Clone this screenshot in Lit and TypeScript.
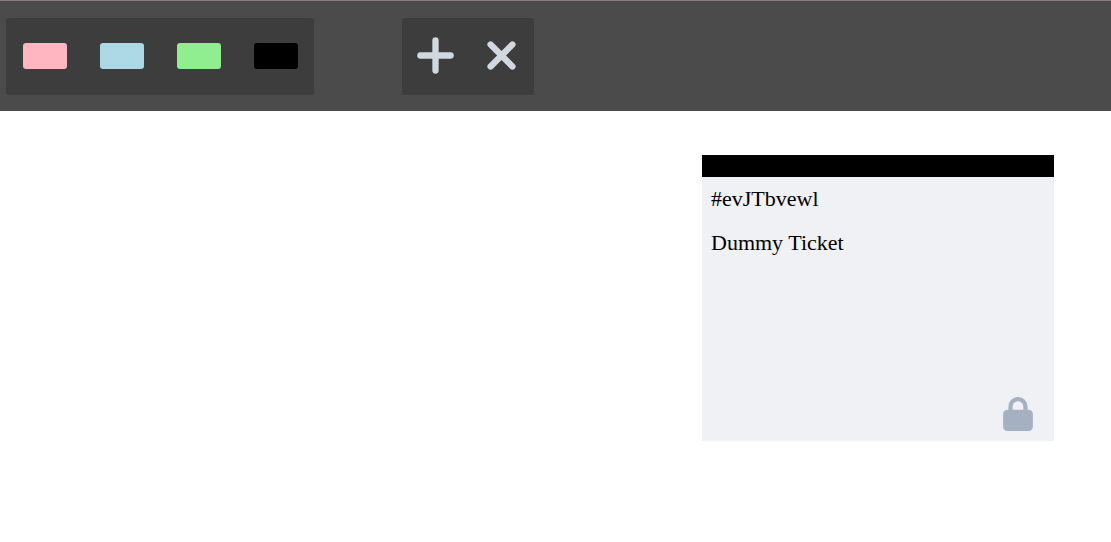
import { LitElement, html, css } from "lit";
import { customElement, state } from "lit/decorators.js";
import { classMap } from "lit/directives/class-map.js";

const COLORS = ["lightpink", "lightblue", "lightgreen", "black"];

@customElement("ticket-card")
class TicketCard extends LitElement {
  static properties = { ticketId: {}, text: {} };
  declare ticketId: string;
  declare text: string;

  static styles = css`
    :host {
      display: flex;
      flex-direction: column;
      width: 352px;
      min-height: 286px;
      background: #f0f1f5;
      color: #000;
      font-family: "Liberation Serif", "Times New Roman", serif;
      font-size: 22px;
      line-height: 44px;
    }
    .band {
      height: 22px;
      background: black;
    }
    .id,
    .task {
      padding: 0 9px;
    }
    .task {
      flex: 1;
    }
    .lock {
      align-self: flex-end;
      display: block;
      margin: 0 21px 10px 0;
      padding: 0;
      border: 0;
      background: none;
      line-height: 0;
      cursor: pointer;
    }
    svg {
      width: 30px;
      height: 34px;
      fill: #a5b1c2;
    }
  `;

  render() {
    return html`
      <div class="band"></div>
      <div class="id">${this.ticketId}</div>
      <div class="task">${this.text}</div>
      <button class="lock" aria-label="Unlock ticket">
        <svg viewBox="0 0 448 512">
          <path
            d="M144 144v48H304V144c0-44.2-35.8-80-80-80s-80 35.8-80 80zM80 192V144C80 64.5 144.5 0 224 0s144 64.5 144 144v48h16c35.3 0 64 28.7 64 64V448c0 35.3-28.7 64-64 64H64c-35.3 0-64-28.7-64-64V256c0-35.3 28.7-64 64-64H80z"
          />
        </svg>
      </button>
    `;
  }
}

@customElement("app-root")
class AppRoot extends LitElement {
  @state() private removing = false;

  static styles = css`
    :host {
      display: block;
    }
    .toolbar {
      display: flex;
      gap: 88px;
      padding: 17px 6px 16px;
      border-top: 1px solid #8d7b80;
      background: #4b4b4b;
    }
    .panel {
      display: flex;
      border-radius: 3px;
      background: #3d3d3d;
    }
    .colors {
      gap: 33px;
      padding: 25px 16px 26px 17px;
    }
    .actions {
      padding-bottom: 2px;
    }
    button {
      padding: 0;
      border: 0;
      cursor: pointer;
    }
    .swatch {
      width: 44px;
      height: 26px;
      border-radius: 3px;
    }
    .lightpink {
      background: lightpink;
    }
    .lightblue {
      background: lightblue;
    }
    .lightgreen {
      background: lightgreen;
    }
    .black {
      background: black;
    }
    .action {
      width: 66px;
      height: 75px;
      background: none;
      display: flex;
      align-items: center;
      justify-content: center;
    }
    .action svg {
      width: 45px;
      height: 45px;
      stroke: #d1d8e0;
      stroke-width: 72;
      stroke-linecap: round;
      fill: none;
    }
  
    .board {
      display: flex;
      flex-wrap: wrap;
      justify-content: flex-end;
      padding: 44px 57px;
    }
  `;

  render() {
    return html`
      <header class="toolbar">
        <div class="panel colors">
          ${COLORS.map(
            (c) =>
              html`<button
                class=${classMap({ swatch: true, [c]: true })}
                aria-label=${c}
              ></button>`
          )}
        </div>
        <div class="panel actions">
          <button class="action" aria-label="Add ticket">
            <svg viewBox="0 0 512 512"><path d="M256 84V428M84 256H428" /></svg>
          </button>
          <button
            class="action"
            aria-label="Remove tickets"
            aria-pressed=${this.removing}
            @click=${() => (this.removing = !this.removing)}
          >
            <svg viewBox="0 0 512 512">
              <path d="M132 132L380 380M380 132L132 380" />
            </svg>
          </button>
        </div>
      </header>
      <main class="board">
        <ticket-card .ticketId=${"#evJTbvewl"} .text=${"Dummy Ticket"}></ticket-card>
      </main>
    `;
  }
}
